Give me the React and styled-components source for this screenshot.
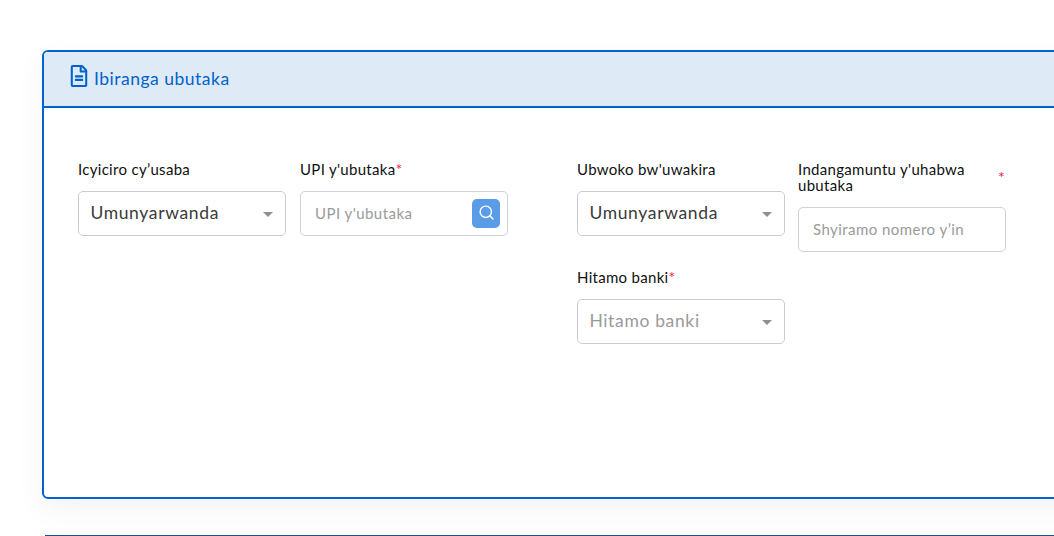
import React from "react";
import styled, { createGlobalStyle } from "styled-components";
import { FaRegFileAlt } from "react-icons/fa";
import { Search } from "lucide-react";

const GlobalStyle = createGlobalStyle`
	html, body {
		margin: 0;
		height: 100%;
		overflow: hidden;
		background: #fff;
		font-family: "Lato", "Open Sans", sans-serif;
	}
`;

const Page = styled.div`
	width: 1120px;
	padding: 50px 0 0 42px;
`;

const Card = styled.section`
	height: 449px;
	box-sizing: border-box;
	border: 2px solid #0062cc;
	border-radius: 6px;
	box-shadow: 0 10px 30px rgba(0, 0, 0, 0.05);
	overflow: hidden;
`;

const CardHeader = styled.header`
	height: 56px;
	box-sizing: border-box;
	display: flex;
	align-items: center;
	gap: 4px;
	padding: 0 0 2px 24px;
	background: #dfeaf7;
	border-bottom: 2px solid #0062cc;
	color: #0062cc;
	font-size: 17.5px;
	letter-spacing: 0.5px;

	svg {
		font-size: 22px;
		margin-top: -4px;
	}
`;

const CardBody = styled.div`
	display: flex;
	gap: 69px;
	padding: 53px 0 0 34px;
`;

const FieldGroup = styled.div`
	display: grid;
	grid-template-columns: 208px 208px;
	column-gap: ${({ $columnGap }) => $columnGap}px;
	row-gap: 17px;
	align-items: start;
`;

const Field = styled.div`
	display: flex;
	flex-direction: column;
`;

const Label = styled.label`
	display: flex;
	justify-content: ${({ $spread }) => ($spread ? "space-between" : "flex-start")};
	min-height: 16px;
	margin-bottom: 14px;
	color: #111;
	font-size: 15px;
	letter-spacing: 0.3px;
	line-height: 16px;
`;

const Required = styled.span`
	color: #f5224d;
	font-size: 16px;
	${({ $spread }) => $spread && "padding-top: 8px; padding-right: 1px;"}
`;

const SelectBox = styled.div`
	height: 45px;
	box-sizing: border-box;
	display: flex;
	align-items: center;
	justify-content: space-between;
	padding: 0 12px 2px 11.4px;
	background: #fff;
	border: 1px solid #c8ccd2;
	border-radius: 5px;
	color: ${({ $placeholder }) => ($placeholder ? "#9a9a9a" : "#3a3a3a")};
	font-size: 17.5px;
	letter-spacing: 0.65px;
`;

const Caret = styled.span`
	width: 0;
	height: 0;
	margin-top: 4px;
	border-left: 5.5px solid transparent;
	border-right: 5.5px solid transparent;
	border-top: 5.5px solid #8f8f8f;
`;

const InputBox = styled.div`
	height: 45px;
	box-sizing: border-box;
	display: flex;
	align-items: center;
	justify-content: space-between;
	padding: 0 7px 2px 14px;
	background: #fff;
	border: 1px solid #cdd1d8;
	border-radius: 5px;
	color: #9a9a9a;
	font-size: 15px;
	letter-spacing: 0.45px;
`;

const SearchButton = styled.span`
	width: 28px;
	height: 29px;
	margin-top: 2px;
	display: flex;
	align-items: center;
	justify-content: center;
	background: #5a9de6;
	border-radius: 5px;
	color: #fff;

	svg {
		margin-top: -2px;
	}
`;

const NextCard = styled.div`
	height: 20px;
	margin: 36px 0 0 3px;
	border-top: 1px solid #1f4f8f;
`;

const SelectField = ({ label, required, value, placeholder }) => (
	<Field>
		<Label>
			{label}
			{required ? <Required>*</Required> : null}
		</Label>
		<SelectBox $placeholder={placeholder}>
			{value}
			<Caret />
		</SelectBox>
	</Field>
);

const App = () => {
	return (
		<Page>
			<GlobalStyle />
			<Card>
				<CardHeader>
					<FaRegFileAlt />
					Ibiranga ubutaka
				</CardHeader>
				<CardBody>
					<FieldGroup $columnGap={14}>
						<SelectField label="Icyiciro cy’usaba" value="Umunyarwanda" />
						<Field>
							<Label>
								UPI y'ubutaka<Required>*</Required>
							</Label>
							<InputBox>
								UPI y'ubutaka
								<SearchButton>
									<Search size={17} strokeWidth={2} />
								</SearchButton>
							</InputBox>
						</Field>
					</FieldGroup>
					<FieldGroup $columnGap={13}>
						<SelectField label="Ubwoko bw'uwakira" value="Umunyarwanda" />
						<Field>
							<Label $spread>
								<span>
									Indangamuntu y'uhabwa
									<br />
									ubutaka
								</span>
								<Required $spread>*</Required>
							</Label>
							<InputBox>Shyiramo nomero y’in</InputBox>
						</Field>
						<SelectField label="Hitamo banki" required value="Hitamo banki" placeholder />
					</FieldGroup>
				</CardBody>
			</Card>
			<NextCard />
		</Page>
	);
};

export default App;
